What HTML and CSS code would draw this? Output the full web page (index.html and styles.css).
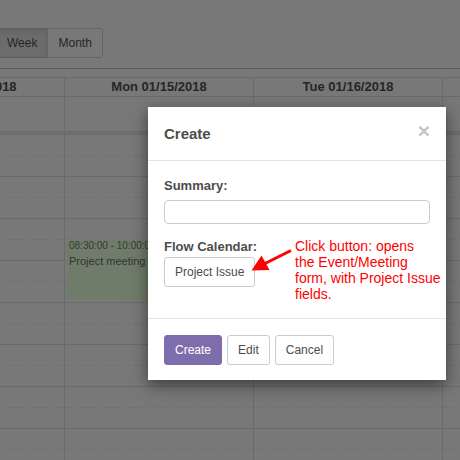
FILE: index.html
```html
<!DOCTYPE html>
<html>
<head>
<meta charset="utf-8">
<link rel="stylesheet" href="styles.css">
</head>
<body>
<div class="page">
  <div class="toolbar">
    <div class="btn-group">
      <button class="tb-btn active">Week</button>
      <button class="tb-btn">Month</button>
    </div>
  </div>
  <div class="cal">
    <div class="row head">
      <div class="cell">Sun 01/14/2018</div>
      <div class="cell">Mon 01/15/2018</div>
      <div class="cell">Tue 01/16/2018</div>
      <div class="cell"></div>
    </div>
    <div class="row allday">
      <div class="cell"></div>
      <div class="cell"></div>
      <div class="cell"></div>
      <div class="cell"></div>
    </div>
    <div class="divider"></div>
    <div class="timegrid">
      <div class="col">
        <div class="slot"></div><div class="slot"></div><div class="slot"></div><div class="slot"></div>
        <div class="slot"></div><div class="slot"></div><div class="slot"></div><div class="slot"></div>
        <div class="slot"></div><div class="slot"></div><div class="slot"></div><div class="slot"></div>
        <div class="slot"></div><div class="slot"></div><div class="slot"></div><div class="slot"></div>
      </div>
      <div class="col">
        <div class="slot"></div><div class="slot"></div><div class="slot"></div><div class="slot"></div>
        <div class="slot"></div><div class="slot"></div><div class="slot"></div><div class="slot"></div>
        <div class="slot"></div><div class="slot"></div><div class="slot"></div><div class="slot"></div>
        <div class="slot"></div><div class="slot"></div><div class="slot"></div><div class="slot"></div>
        <div class="event">
          <div class="ev-time">08:30:00 - 10:00:00</div>
          <div class="ev-title">Project meeting</div>
        </div>
      </div>
      <div class="col">
        <div class="slot"></div><div class="slot"></div><div class="slot"></div><div class="slot"></div>
        <div class="slot"></div><div class="slot"></div><div class="slot"></div><div class="slot"></div>
        <div class="slot"></div><div class="slot"></div><div class="slot"></div><div class="slot"></div>
        <div class="slot"></div><div class="slot"></div><div class="slot"></div><div class="slot"></div>
      </div>
      <div class="col">
        <div class="slot"></div><div class="slot"></div><div class="slot"></div><div class="slot"></div>
        <div class="slot"></div><div class="slot"></div><div class="slot"></div><div class="slot"></div>
        <div class="slot"></div><div class="slot"></div><div class="slot"></div><div class="slot"></div>
        <div class="slot"></div><div class="slot"></div><div class="slot"></div><div class="slot"></div>
      </div>
    </div>
  </div>
</div>

<div class="modal">
  <div class="m-header">
    <h4 class="m-title">Create</h4>
    <span class="close">&times;</span>
  </div>
  <div class="m-body">
    <div class="label">Summary:</div>
    <input class="input" type="text">
    <div class="label">Flow Calendar:</div>
    <button class="btn btn-flow">Project Issue</button>
  </div>
  <div class="m-footer">
    <button class="btn btn-primary">Create</button>
    <button class="btn">Edit</button>
    <button class="btn">Cancel</button>
  </div>
</div>

<svg class="arrow" width="460" height="460" viewBox="0 0 460 460">
  <line x1="291" y1="250.5" x2="263" y2="264.5" stroke="#ff0000" stroke-width="3"/>
  <polygon points="251.5,270.5 261.5,255.5 269.5,270" fill="#ff0000"/>
</svg>
<div class="note">Click button: opens<br>the Event/Meeting<br>form, with Project Issue<br>fields.</div>
</body>
</html>
```

FILE: styles.css
```css
* { box-sizing: border-box; }
html, body { margin: 0; padding: 0; }
body {
  width: 460px;
  height: 460px;
  overflow: hidden;
  position: relative;
  background: #787878;
  font-family: "Liberation Sans", Arial, sans-serif;
  color: #4c4c4c;
}
.page { width: 460px; height: 460px; overflow: hidden; }

.toolbar {
  height: 69px;
  padding-top: 28px;
  border-bottom: 1px solid #5a5a5a;
}
.btn-group { display: flex; margin-left: -4px; }
.tb-btn {
  height: 30px;
  padding: 0 10px;
  font: 12px/1 "Liberation Sans", Arial, sans-serif;
  color: #262626;
  background: #787878;
  border: 1px solid #646464;
  border-radius: 0;
}
.tb-btn.active {
  background: #6c6c6c;
  border-color: #5e5e5e;
  box-shadow: inset 0 3px 5px rgba(0,0,0,0.08);
}
.tb-btn + .tb-btn { margin-left: -1px; border-radius: 0 3px 3px 0; }

.cal {
  margin-top: 8px;
  margin-left: -124px;
  width: 756px;
  border-top: 1px solid #6a6a6a;
}
.row { display: grid; grid-template-columns: repeat(4, 189px); }
.head .cell {
  height: 19px;
  border-right: 1px solid #6a6a6a;
  border-bottom: 1px solid #6a6a6a;
  font: bold 13px/18px "Liberation Sans", Arial, sans-serif;
  color: #262626;
  text-align: center;
  white-space: nowrap;
}
.allday .cell { height: 34px; border-right: 1px solid #6a6a6a; }
.divider {
  height: 4px;
  border-top: 1px solid #6a6a6a;
  border-bottom: 1px solid #6a6a6a;
  background: #707070;
}
.timegrid { display: grid; grid-template-columns: repeat(4, 189px); }
.col { position: relative; border-right: 1px solid #6a6a6a; }
.slot {
  height: 21px;
  background-image: repeating-linear-gradient(to right, #6a6a6a 0 1px, transparent 1px 3px);
  background-size: 100% 1px;
  background-position: left bottom;
  background-repeat: no-repeat;
}
.slot:nth-child(even) {
  background-image: none;
  border-bottom: 1px solid #6a6a6a;
}
.event {
  position: absolute;
  top: 104px;
  left: 2px;
  right: 2px;
  height: 60px;
  padding: 1px 2px;
  background: #6f7c6a;
  border-radius: 3px;
  white-space: nowrap;
  overflow: hidden;
}
.ev-time { font-size: 10px; line-height: 12px; color: #383838; }
.ev-title { font-size: 11px; line-height: 14px; margin-top: 2px; color: #333; }

.modal {
  position: absolute;
  left: 148px;
  top: 107px;
  width: 298px;
  background: #fff;
  box-shadow: 0 5px 15px rgba(0,0,0,0.5);
}
.m-header {
  display: flex;
  justify-content: space-between;
  align-items: flex-start;
  padding: 16px;
  border-bottom: 1px solid #e5e5e5;
}
.m-title {
  margin: 0;
  font: bold 15px/21px "Liberation Sans", Arial, sans-serif;
  color: #4c4c4c;
}
.close {
  font: bold 21px/1 "Liberation Sans", Arial, sans-serif;
  color: #c4c4c4;
  margin-top: -3px;
}
.m-body { padding: 16px 16px 31px; }
.label {
  font: bold 13px/18px "Liberation Sans", Arial, sans-serif;
  color: #4c4c4c;
}
.input {
  display: block;
  width: 100%;
  height: 24px;
  margin: 5px 0 14px;
  border: 1px solid #ccc;
  border-radius: 4px;
  background: #fff;
}
.btn {
  height: 30px;
  padding: 0 10px;
  font: 12px/1 "Liberation Sans", Arial, sans-serif;
  color: #4c4c4c;
  background: #fff;
  border: 1px solid #ccc;
  border-radius: 3px;
}
.btn-flow { display: block; margin-top: 1px; }
.m-footer {
  display: flex;
  gap: 5px;
  padding: 16px 16px 15px;
  border-top: 1px solid #e5e5e5;
}
.btn-primary { background: #7e6dac; border-color: #7e6dac; color: #fff; }

.arrow { position: absolute; left: 0; top: 0; pointer-events: none; }
.note {
  position: absolute;
  left: 295px;
  top: 238px;
  font: 14px/16px "Liberation Sans", Arial, sans-serif;
  color: #ff0000;
  white-space: nowrap;
}
```
